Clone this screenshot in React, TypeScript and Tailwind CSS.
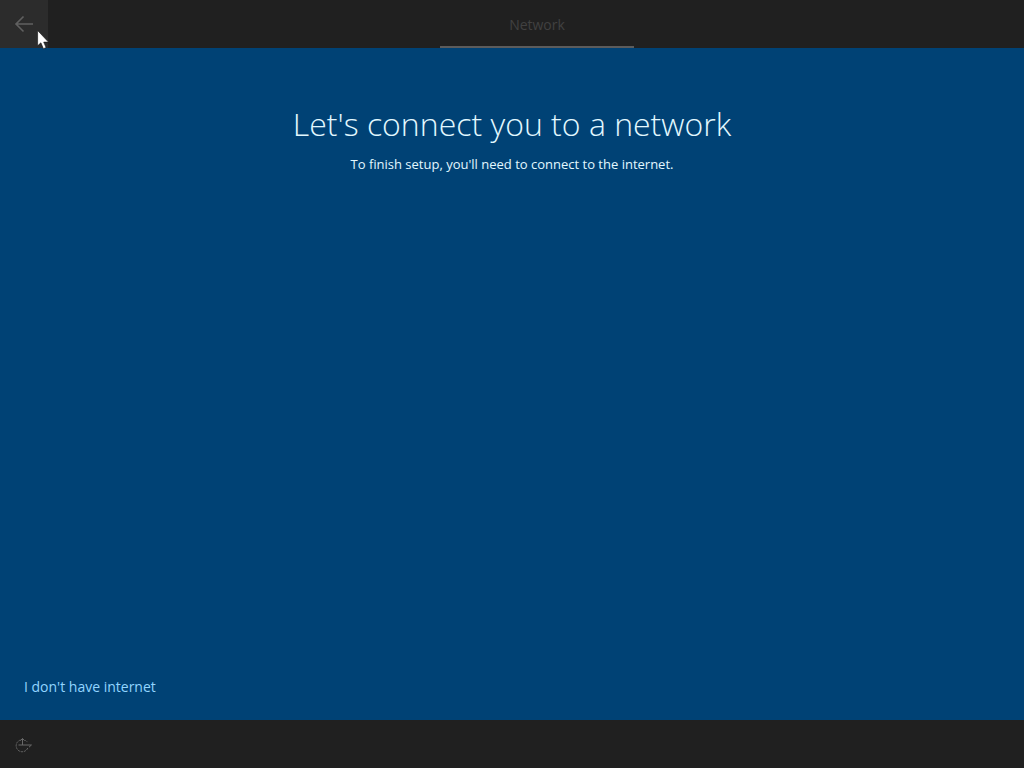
export default function App() {
  return (
    <div className="relative flex min-h-screen flex-col bg-[#004275] font-['Open_Sans','Noto_Sans',sans-serif]">
      <header className="flex h-12 bg-[#202020]">
        <button type="button" aria-label="Back" className="flex size-12 shrink-0 items-center justify-center bg-[#2c2c2c]">
          <svg width="20" height="18" viewBox="0 0 20 18" fill="none" stroke="#606060" strokeWidth="1.6" aria-hidden="true">
            <path d="M19 9H2M9.5 1.5L2 9l7.5 7.5" />
          </svg>
        </button>
        <div className="flex grow justify-center pl-0.5">
          <div className="flex w-[194px] items-center justify-center border-b-2 border-[#5c5c5c] pt-1 text-sm text-[#414141]">
            Network
          </div>
        </div>
      </header>

      <main className="flex grow flex-col px-6 pt-14">
        <h1 className="text-center text-[32px] leading-[40px] font-light text-[#e2f8ff]">Let's connect you to a network</h1>
        <p className="mt-2 text-center text-[13px] leading-6 text-[#e2f8ff]">
          To finish setup, you'll need to connect to the internet.
        </p>
        <a href="#offline" className="mt-auto mb-5 self-start pb-px text-sm leading-6 text-[#92d5ff]">
          I don't have internet
        </a>
      </main>

      <footer className="flex h-12 items-center bg-[#202020] px-3 pt-0.5">
        <button type="button" aria-label="Ease of access" className="flex size-6 items-center justify-center">
          <svg width="18" height="16" viewBox="0 0 18 16" fill="none" stroke="#686868" strokeWidth="1" aria-hidden="true">
            <path d="M5.5 3A6 6 0 1 0 13 10.2" strokeDasharray="2.2 0.9" />
            <path d="M10 3.2a6 6 0 0 1 2.6 2.2" strokeDasharray="1 1" />
            <path d="M7.5 1.5v6.5M5.3 3.7l2.2-2.2 2.2 2.2M3.5 8h13M14 10.2L16.4 8" />
          </svg>
        </button>
      </footer>

      <svg
        className="pointer-events-none absolute top-[30px] left-[37px]"
        width="12"
        height="20"
        viewBox="0 0 12 20"
        fill="#fff"
        stroke="#111"
        strokeWidth="0.6"
        aria-hidden="true"
      >
        <path d="M.6 .5v15.3l3.3-3 2.5 5.9 2.7-1.1-2.4-5.5h4.8z" />
      </svg>
    </div>
  );
}
